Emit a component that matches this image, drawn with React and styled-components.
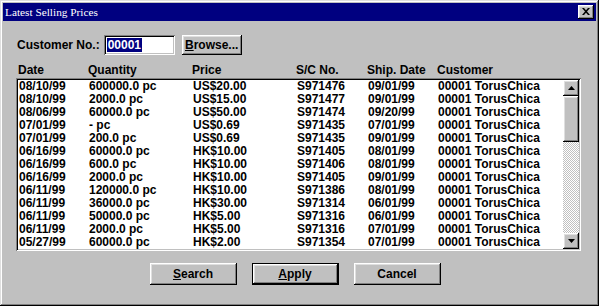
import React from "react";
import styled, { createGlobalStyle } from "styled-components";

const GlobalStyle = createGlobalStyle`
  html, body { margin: 0; padding: 0; background: #c0c0c0; }
  body { font-family: "Liberation Sans", Arial, sans-serif; }
  * { box-sizing: border-box; }
`;

const Window = styled.div`
  width: 599px;
  height: 306px;
  background: #c0c0c0;
  padding: 3px;
  display: flex;
  flex-direction: column;
  box-shadow: inset -1px -1px #000, inset 1px 1px #dfdfdf, inset -2px -2px #808080, inset 2px 2px #fff;
  font: bold 12px "Liberation Sans", Arial, sans-serif;
  color: #000;
`;

const TitleBar = styled.div`
  height: 18px;
  background: #000080;
  display: flex;
  align-items: center;
  justify-content: space-between;
  padding: 0 2px 0 2px;
`;

const TitleText = styled.span`
  font: normal 11.3px "Liberation Serif", "Times New Roman", serif;
  color: #fff;
`;

const bevel = `
  box-shadow: inset -1px -1px #000, inset 1px 1px #fff, inset -2px -2px #808080, inset 2px 2px #dfdfdf;
`;

const CloseButton = styled.div`
  width: 16px;
  height: 14px;
  background: #c0c0c0;
  ${bevel}
  display: flex;
  align-items: center;
  justify-content: center;
  padding-bottom: 1px;
`;

const Body = styled.div`
  flex: 1;
  display: flex;
  flex-direction: column;
  padding: 14px 0 0 13px;
`;

const CustomerRow = styled.div`
  display: flex;
  align-items: center;
  height: 20px;
  padding-left: 1px;
`;

const Label = styled.span`
  margin-right: 4px;
`;

const Input = styled.div`
  width: 71px;
  height: 20px;
  background: #fff;
  box-shadow: inset 1px 1px #808080, inset -1px -1px #fff, inset 2px 2px #000, inset -2px -2px #c0c0c0;
  padding: 3px 0 0 3px;
  margin-right: 7px;
`;

const Selected = styled.span`
  background: #000080;
  color: #fff;
  display: inline-block;
  line-height: 14px;
  padding: 0 1px;
`;

const Button = styled.div`
  width: ${(p) => p.$w}px;
  height: ${(p) => p.$h}px;
  background: #c0c0c0;
  display: flex;
  align-items: center;
  justify-content: center;
  ${(p) =>
    p.$default
      ? `box-shadow: inset 0 0 0 1px #000, inset -2px -2px #000, inset 2px 2px #fff, inset -3px -3px #808080, inset 3px 3px #dfdfdf;`
      : bevel}
  u { text-decoration: underline; }
`;

const Grid = styled.div`
  display: grid;
  grid-template-columns: 70px 104px 104px 71px 70px 1fr;
`;

const HeaderRow = styled(Grid)`
  margin-top: 8px;
  height: 14px;
  line-height: 14px;
  padding-left: 2px;
`;

const ListBox = styled.div`
  margin-top: 1px;
  width: 565px;
  height: 173px;
  padding: 2px;
  background: #fff;
  box-shadow: inset 1px 1px #808080, inset -1px -1px #fff, inset 2px 2px #000, inset -2px -2px #c0c0c0;
  display: flex;
`;

const Rows = styled.div`
  flex: 1;
  overflow: hidden;
`;

const Row = styled(Grid)`
  height: 13px;
  line-height: 13px;
  padding-left: 1px;
  white-space: nowrap;
`;

const ScrollBar = styled.div`
  width: 16px;
  display: flex;
  flex-direction: column;
`;

const ScrollButton = styled.div`
  width: 16px;
  height: ${(p) => p.$h}px;
  background: #c0c0c0;
  ${bevel}
  display: flex;
  align-items: center;
  justify-content: center;
`;

const Track = styled.div`
  flex: 1;
  background-color: #fff;
  background-image: conic-gradient(#c0c0c0 25%, #fff 0 50%, #c0c0c0 0 75%, #fff 0);
  background-size: 2px 2px;
`;

const ButtonRow = styled.div`
  display: flex;
  justify-content: center;
  gap: 15px;
  margin-top: 12px;
  padding-right: 22px;
`;

const Arrow = ({ down }) => (
  <svg width="7" height="4" viewBox="0 0 7 4">
    <path d={down ? "M0 0h7L3.5 4z" : "M3.5 0L7 4H0z"} fill="#000" />
  </svg>
);

const data = [
  ["08/10/99", "600000.0 pc", "US$20.00", "S971476", "09/01/99"],
  ["08/10/99", "2000.0 pc", "US$15.00", "S971477", "09/01/99"],
  ["08/06/99", "60000.0 pc", "US$50.00", "S971474", "09/20/99"],
  ["07/01/99", "- pc", "US$0.69", "S971435", "07/01/99"],
  ["07/01/99", "200.0 pc", "US$0.69", "S971435", "09/01/99"],
  ["06/16/99", "60000.0 pc", "HK$10.00", "S971405", "08/01/99"],
  ["06/16/99", "600.0 pc", "HK$10.00", "S971406", "08/01/99"],
  ["06/16/99", "2000.0 pc", "HK$10.00", "S971405", "09/01/99"],
  ["06/11/99", "120000.0 pc", "HK$10.00", "S971386", "08/01/99"],
  ["06/11/99", "36000.0 pc", "HK$30.00", "S971314", "06/01/99"],
  ["06/11/99", "50000.0 pc", "HK$5.00", "S971316", "06/01/99"],
  ["06/11/99", "2000.0 pc", "HK$5.00", "S971316", "07/01/99"],
  ["05/27/99", "60000.0 pc", "HK$2.00", "S971354", "07/01/99"],
];

export default function App() {
  return (
    <>
      <GlobalStyle />
      <Window>
        <TitleBar>
          <TitleText>Latest Selling Prices</TitleText>
          <CloseButton>
            <svg width="8" height="7" viewBox="0 0 8 7">
              <path d="M0 0h2l2 2.3 2-2.3h2L5 3.5 8 7H6L4 4.7 2 7H0l3-3.5z" fill="#000" />
            </svg>
          </CloseButton>
        </TitleBar>
        <Body>
          <CustomerRow>
            <Label>Customer No.:</Label>
            <Input>
              <Selected>00001</Selected>
            </Input>
            <Button $w={60} $h={20}>
              <span><u>B</u>rowse...</span>
            </Button>
          </CustomerRow>
          <HeaderRow>
            <span>Date</span>
            <span>Quantity</span>
            <span>Price</span>
            <span>S/C No.</span>
            <span>Ship. Date</span>
            <span>Customer</span>
          </HeaderRow>
          <ListBox>
            <Rows>
              {data.map((r, i) => (
                <Row key={i}>
                  {r.map((c, j) => (
                    <span key={j}>{c}</span>
                  ))}
                  <span>00001 TorusChica</span>
                </Row>
              ))}
            </Rows>
            <ScrollBar>
              <ScrollButton $h={16}><Arrow /></ScrollButton>
              <ScrollButton $h={46} />
              <Track />
              <ScrollButton $h={16}><Arrow down /></ScrollButton>
            </ScrollBar>
          </ListBox>
          <ButtonRow>
            <Button $w={87} $h={22}><span><u>S</u>earch</span></Button>
            <Button $w={87} $h={22} $default><span><u>A</u>pply</span></Button>
            <Button $w={87} $h={22}><span>Cancel</span></Button>
          </ButtonRow>
        </Body>
      </Window>
    </>
  );
}
